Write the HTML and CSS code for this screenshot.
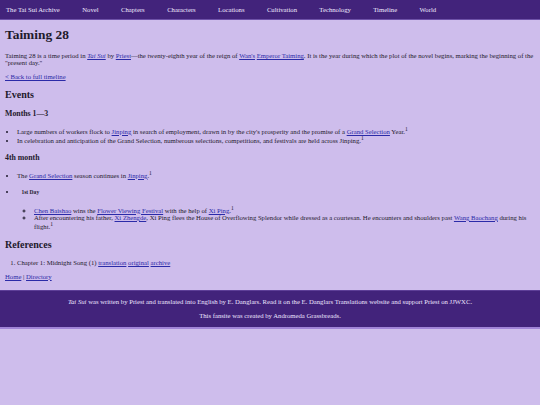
FILE: index.html
```html
<!DOCTYPE html>
<html lang="en">
<head>
<meta charset="utf-8">
<title>Taiming 28</title>
<link rel="stylesheet" href="styles.css">
</head>
<body>
<nav class="topnav">
  <a href="#">The Tai Sui Archive</a>
  <a href="#">Novel</a>
  <a href="#">Chapters</a>
  <a href="#">Characters</a>
  <a href="#">Locations</a>
  <a href="#">Cultivation</a>
  <a href="#">Technology</a>
  <a href="#">Timeline</a>
  <a href="#">World</a>
</nav>
<main class="content">
  <h1>Taiming 28</h1>
  <p>Taiming 28 is a time period in <a href="#"><i>Tai Sui</i></a> by <a href="#">Priest</a>—the twenty-eighth year of the reign of <a href="#">Wan's</a> <a href="#">Emperor Taiming</a>. It is the year during which the plot of the novel begins, marking the beginning of the "present day."</p>
  <p><a href="#">&lt; Back to full timeline</a></p>
  <h2>Events</h2>
  <h3>Months 1—3</h3>
  <ul class="list">
    <li>Large numbers of workers flock to <a href="#">Jinping</a> in search of employment, drawn in by the city's prosperity and the promise of a <a href="#">Grand Selection</a> Year.<sup>1</sup></li>
    <li>In celebration and anticipation of the Grand Selection, numberous selections, competitions, and festivals are held across Jinping.<sup>1</sup></li>
  </ul>
  <h3>4th month</h3>
  <ul class="list">
    <li>The <a href="#">Grand Selection</a> season continues in <a href="#">Jinping</a>.<sup>1</sup></li>
    <li>
      <h5>1st Day</h5>
      <ul class="sublist">
        <li><a href="#">Chen Baishao</a> wins the <a href="#">Flower Viewing Festival</a> with the help of <a href="#">Xi Ping</a>.<sup>1</sup></li>
        <li>After encountering his father, <a href="#">Xi Zhengde</a>, Xi Ping flees the House of Overflowing Splendor while dressed as a courtesan. He encounters and shoulders past <a href="#">Wang Baochang</a> during his flight.<sup>1</sup></li>
      </ul>
    </li>
  </ul>
  <h2>References</h2>
  <ol class="refs">
    <li>Chapter 1: Midnight Song (1) <a href="#">translation</a> <a href="#">original</a> <a href="#">archive</a></li>
  </ol>
  <p class="bottom-links"><a href="#">Home</a> | <a href="#">Directory</a></p>
</main>
<footer class="site-footer">
  <p><i>Tai Sui</i> was written by Priest and translated into English by E. Danglars. Read it on the E. Danglars Translations website and support Priest on JJWXC.</p>
  <p>This fansite was created by Andromeda Grassbreads.</p>
</footer>
</body>
</html>
```

FILE: styles.css
```css
html {
  font-size: 6.7px;
  background: #cebdec;
}
body {
  margin: 0;
  font-family: "Liberation Serif", "Times New Roman", serif;
  font-size: 1rem;
  color: #1e1a2c;
  background: #cebdec;
}
a {
  color: #2b2ba8;
}
.topnav {
  display: flex;
  align-items: center;
  gap: 22.4px;
  height: 19px;
  padding: 0 6px;
  background: #42237b;
  border-bottom: 1px solid #6e52a8;
}
.topnav a {
  color: #f0eaff;
  text-decoration: none;
}
.content {
  padding: 0 5px 3px;
}
h1 {
  font-size: 2em;
  margin: 0.55em 0 0.67em;
}
h2 {
  font-size: 1.5em;
  margin: 0.9em 0;
}
h3 {
  font-size: 1.17em;
  margin: 1em 0;
}
h5 {
  font-size: 0.83em;
  margin: 1.67em 0 1.67em 0.8em;
}
p {
  margin: 1em 0;
}
.list {
  padding-left: 12px;
  margin: 1em 0 1.3em;
}
.sublist {
  list-style-type: circle;
  padding-left: 17px;
  margin: 1em 0;
}
.refs {
  padding-left: 12px;
  margin: 1em 0;
}
.site-footer {
  background: #42237b;
  color: #ece4ff;
  text-align: center;
  padding: 1px 0;
  border-top: 1px solid #5e3f98;
  border-bottom: 2px solid #a184d8;
}
.site-footer p {
  margin: 1em 0;
}
```
